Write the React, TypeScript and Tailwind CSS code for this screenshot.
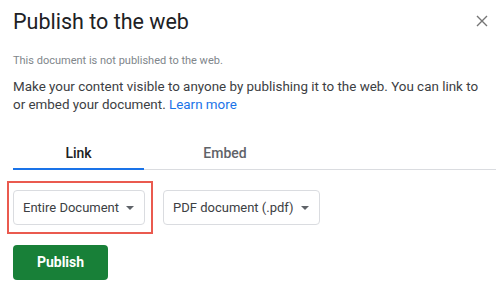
function Caret() {
  return (
    <svg width="8" height="4" viewBox="0 0 8 4" className="ml-[7px]">
      <path d="M0 0 L8 0 L4 4 Z" fill="#5f6368" />
    </svg>
  );
}

function Dropdown({ label }: { label: string }) {
  return (
    <div className="flex items-center whitespace-nowrap h-[35px] pl-[9px] pr-[10px] border border-[#dadce0] rounded-[4px] bg-white text-[13px] text-[#3c4043]">
      <span>{label}</span>
      <Caret />
    </div>
  );
}

export default function App() {
  return (
    <div
      className="w-[503px] h-[289px] bg-white relative overflow-hidden"
      style={{ fontFamily: 'Roboto, "Liberation Sans", sans-serif' }}
    >
      {/* Header */}
      <div className="flex items-start justify-between pl-[13px] pr-[15px] pt-[6px]">
        <h1 className="text-[21.5px] leading-[32px] text-[#202124]">Publish to the web</h1>
        <button className="mt-[9px]">
          <svg width="12" height="12" viewBox="0 0 12 12">
            <path d="M1 1 L11 11 M11 1 L1 11" stroke="#757575" strokeWidth="1.4" />
          </svg>
        </button>
      </div>

      <div className="px-[13px]">
        <p className="mt-[16px] text-[11px] leading-[14px] text-[#80868b]">This document is not published to the web.</p>
        <p className="mt-[10px] text-[13.4px] leading-[18px] text-[#3c4043]">
          Make your content visible to anyone by publishing it to the web. You can link to or embed your document.{' '}
          <span className="text-[#1a73e8]">Learn more</span>
        </p>

        {/* Tabs */}
        <div className="mt-[29px] flex w-[483px] border-b border-[#dadce0]">
          <div className="w-[131px] flex justify-center pb-[4px] text-[14px] font-medium text-[#202124] border-b-2 border-[#1a73e8] -mb-[1px]">
            Link
          </div>
          <div className="w-[162px] flex justify-center pb-[4px] text-[14px] font-medium text-[#5f6368]">Embed</div>
        </div>

        {/* Dropdowns */}
        <div className="mt-[11px] flex items-center gap-[10px] -ml-[6px]">
          <div className="border-[2px] border-[#ea5a4f] pl-[4px] pr-[6px] py-[7px]">
            <Dropdown label="Entire Document" />
          </div>
          <Dropdown label="PDF document (.pdf)" />
        </div>

        <button className="mt-[11px] w-[95px] h-[35px] rounded-[4px] bg-[#188038] text-white text-[14px] font-bold">
          Publish
        </button>
      </div>
    </div>
  );
}
